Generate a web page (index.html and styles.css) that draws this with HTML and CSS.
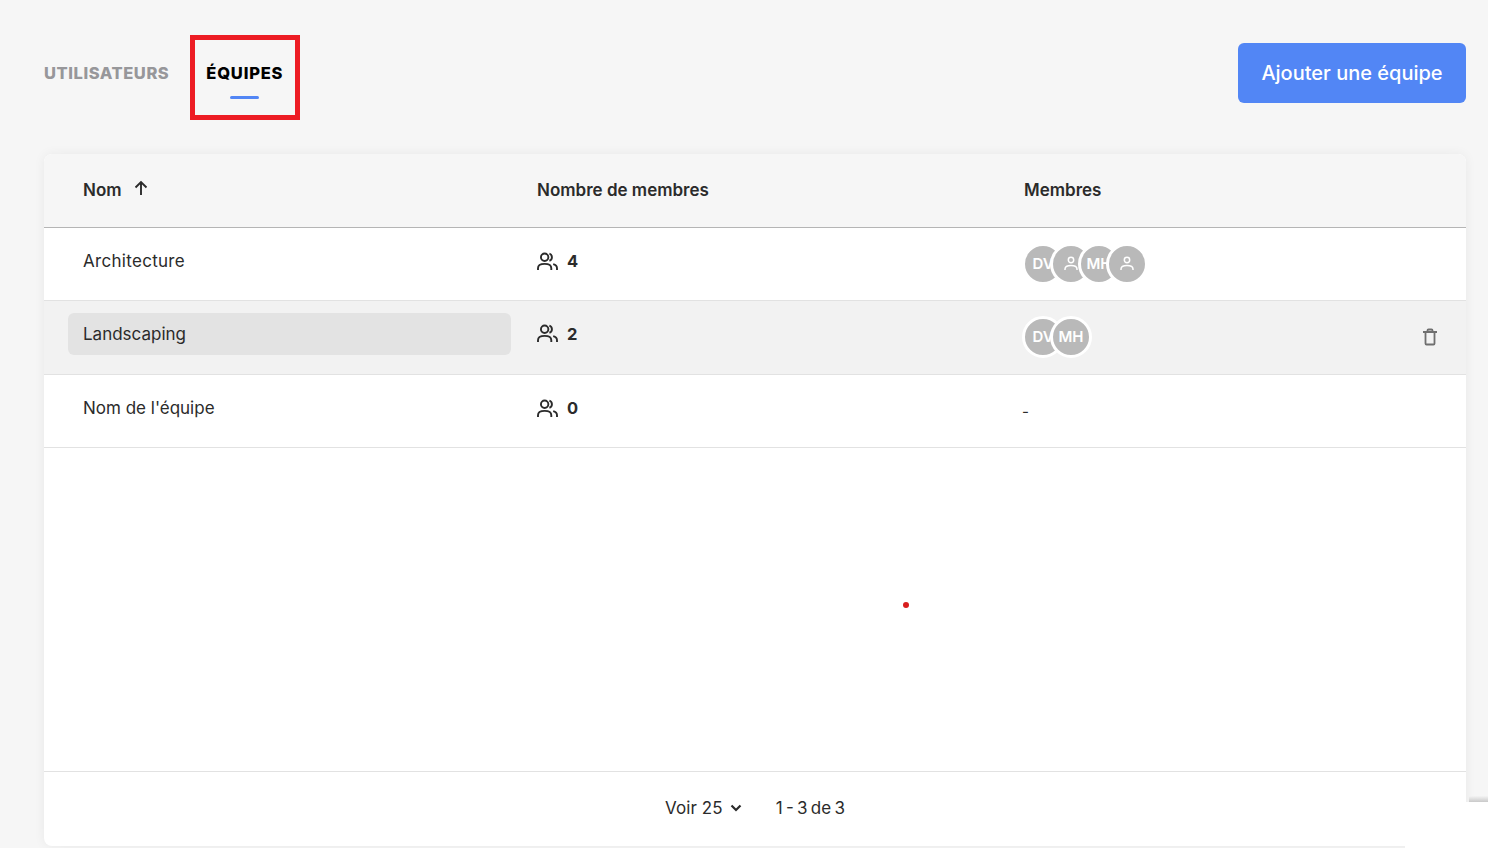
FILE: index.html
```html
<!DOCTYPE html>
<html lang="fr">
<head>
<meta charset="utf-8">
<title>Équipes</title>
<link rel="stylesheet" href="styles.css">
</head>
<body>
<div class="page">
  <header class="top">
    <nav class="tabs">
      <a class="tab">UTILISATEURS</a>
      <a class="tab tab-active"><span>ÉQUIPES</span><i class="underline"></i></a>
    </nav>
    <button class="add">Ajouter une équipe</button>
  </header>
  <main class="card">
    <div class="row head">
      <div class="c1 sort">Nom
        <svg class="arrow" viewBox="0 0 14 16" width="14" height="16"><path d="M7 15V2M1.500 7.500 7 2l5.500 5.500" fill="none" stroke="#2b2b2b" stroke-width="1.900"/></svg>
      </div>
      <div class="c2">Nombre de membres</div>
      <div class="c3">Membres</div>
    </div>
    <div class="row">
      <div class="c1"><span class="name name-wide">Architecture</span></div>
      <div class="c2 count">
        <svg class="group" viewBox="0 0 22 20" width="21" height="19"><use href="#grp"/></svg><b>4</b>
      </div>
      <div class="c3 avatars">
        <span class="av">DV</span>
        <span class="av"><svg viewBox="0 0 16 16" width="16" height="16"><use href="#usr"/></svg></span>
        <span class="av">MH</span>
        <span class="av"><svg viewBox="0 0 16 16" width="16" height="16"><use href="#usr"/></svg></span>
      </div>
    </div>
    <div class="row hover">
      <div class="c1"><span class="name name-hl">Landscaping</span></div>
      <div class="c2 count">
        <svg class="group" viewBox="0 0 22 20" width="21" height="19"><use href="#grp"/></svg><b>2</b>
      </div>
      <div class="c3 avatars avatars-up">
        <span class="av">DV</span>
        <span class="av">MH</span>
      </div>
      <svg class="trash" viewBox="0 0 16 18" width="16" height="18"><path d="M1 4h14M3.500 4v11.500a1 1 0 0 0 1 1h7a1 1 0 0 0 1-1V4M5.500 4V2.500a1 1 0 0 1 1-1h3a1 1 0 0 1 1 1V4" fill="none" stroke="#6f6f6f" stroke-width="1.800"/></svg>
    </div>
    <div class="row">
      <div class="c1"><span class="name">Nom de l'équipe</span></div>
      <div class="c2 count">
        <svg class="group" viewBox="0 0 22 20" width="21" height="19"><use href="#grp"/></svg><b>0</b>
      </div>
      <div class="c3 dash">-</div>
    </div>
    <div class="spacer"></div>
    <footer class="foot">
      <span class="voir">Voir 25
        <svg viewBox="0 0 12 8" width="12" height="8"><path d="M1.500 1.500 6 6l4.500-4.500" fill="none" stroke="#2b2b2b" stroke-width="2.200"/></svg>
      </span>
      <span class="range">1 - 3 de 3</span>
    </footer>
  </main>
</div>
<i class="dot"></i>
<i class="corner"></i>
<svg class="defs" width="0" height="0">
  <defs>
    <g id="grp" fill="none" stroke="#2b2b2b" stroke-width="2">
      <circle cx="8" cy="5.500" r="3.900"/>
      <path d="M1 19v-2C1 14 3.500 12.500 8 12.500s7 1.500 7 4.500v2"/>
      <path d="M13 1.800a3.900 3.900 0 0 1 0 7.400M17 12.800c2.500.7 4 2 4 4.200v2"/>
    </g>
    <g id="usr" fill="none" stroke="#fff" stroke-width="1.500">
      <circle cx="8" cy="4" r="2.700"/>
      <path d="M2 14v-1C2 10.500 4.500 9.500 8 9.500s6 1 6 3.500v1"/>
    </g>
  </defs>
</svg>
</body>
</html>
```

FILE: styles.css
```css
* { box-sizing: border-box; }
html, body { margin: 0; height: 100%; }
body {
  background: #f6f6f6;
  color: #2b2b2b;
  font-family: "Inter", "Liberation Sans", sans-serif;
  font-size: 17px;
  overflow: hidden;
  position: relative;
}
.page { padding: 35px 22px 0 44px; display: flex; flex-direction: column; height: 848px; }
.top { display: flex; justify-content: space-between; align-items: flex-start; height: 119px; flex: none; }
.tabs { display: flex; align-items: flex-start; gap: 21px; }
.tab {
  font-size: 16.500px;
  font-weight: 800;
  letter-spacing: 0.55px;
  color: #97979a;
  padding-top: 28px;
}
.tab-active {
  color: #000;
  width: 110px;
  height: 85px;
  border: 5px solid #ed1c24;
  padding: 23px 0 0 11px;
  letter-spacing: 0.8px;
  display: flex;
  flex-direction: column;
}
.underline { display: block; width: 29px; height: 3px; background: #5286f5; border-radius: 2px; margin: 13px 0 0 24px; }
.add {
  margin-top: 8px;
  width: 228px;
  height: 60px;
  padding-bottom: 2px;
  background: #5286f5;
  border: 0;
  border-radius: 6px;
  color: #fff;
  font: 500 20px "Inter", "Liberation Sans", sans-serif;
}
.card {
  flex: 1;
  margin-bottom: 2px;
  background: #fff;
  border-radius: 8px;
  box-shadow: 0 0 12px rgba(0,0,0,.06);
  display: flex;
  flex-direction: column;
  overflow: hidden;
}
.row {
  display: flex;
  align-items: center;
  height: 73px;
  flex: none;
  border-bottom: 1px solid #e2e2e2;
  position: relative;
}
.row.hover { height: 74px; background: #f2f2f2; }
.head { height: 74px; background: #f6f6f6; border-bottom-color: #b5b5b5; font-weight: 600; padding-bottom: 2px; }
.c1 { width: 493px; padding-left: 24px; flex: none; }
.c2 { width: 487px; flex: none; }
.c3 { flex: 1; }
.head .c1 { padding-left: 39px; }
.sort { display: flex; align-items: center; gap: 12px; }
.arrow { margin-top: -3px; }
.name { display: block; height: 42px; line-height: 42px; padding-left: 15px; width: 443px; border-radius: 6px; margin-top: -7px; }
.name-hl { background: #e3e3e3; }
.name-wide { letter-spacing: 0.3px; }
.count { display: flex; align-items: center; gap: 9px; margin-top: -6px; }
.hover .count { margin-top: -8px; }
.count b { font-weight: 700; font-size: 16.500px; }
.avatars { display: flex; }
.avatars-up { margin-top: -2px; }
.av {
  width: 42px;
  height: 42px;
  margin-right: -14px;
  padding-bottom: 1px;
  border-radius: 50%;
  background: #b9b9b9;
  border: 3px solid #fff;
  color: #fff;
  font-size: 15px;
  font-weight: 600;
  display: flex;
  align-items: center;
  justify-content: center;
  overflow: hidden;
  white-space: nowrap;
  flex: none;
}
.av:first-child { margin-left: -2px; }
.dash { font-size: 15px; margin-left: -2px; }
.trash { position: absolute; right: 28px; top: 27px; }
.spacer { flex: 1; }
.foot {
  flex: none;
  height: 75px;
  border-top: 1px solid #e2e2e2;
  display: flex;
  align-items: center;
  gap: 34px;
  padding: 0 0 2px 621px;
}
.voir { display: flex; align-items: center; gap: 7px; letter-spacing: 0.1px; }
.range { word-spacing: -1.500px; }
.dot { position: absolute; left: 903px; top: 602px; width: 6px; height: 6px; border-radius: 50%; background: #d81e1e; }
.corner { position: absolute; right: 0; bottom: 0; width: 83px; height: 46px; background: #fff; }
.corner::before {
  content: "";
  position: absolute;
  left: 64px;
  right: 0;
  top: -6px;
  height: 6px;
  background: linear-gradient(#f4f4f4, #c9c9c9);
}
.defs { position: absolute; }
```
